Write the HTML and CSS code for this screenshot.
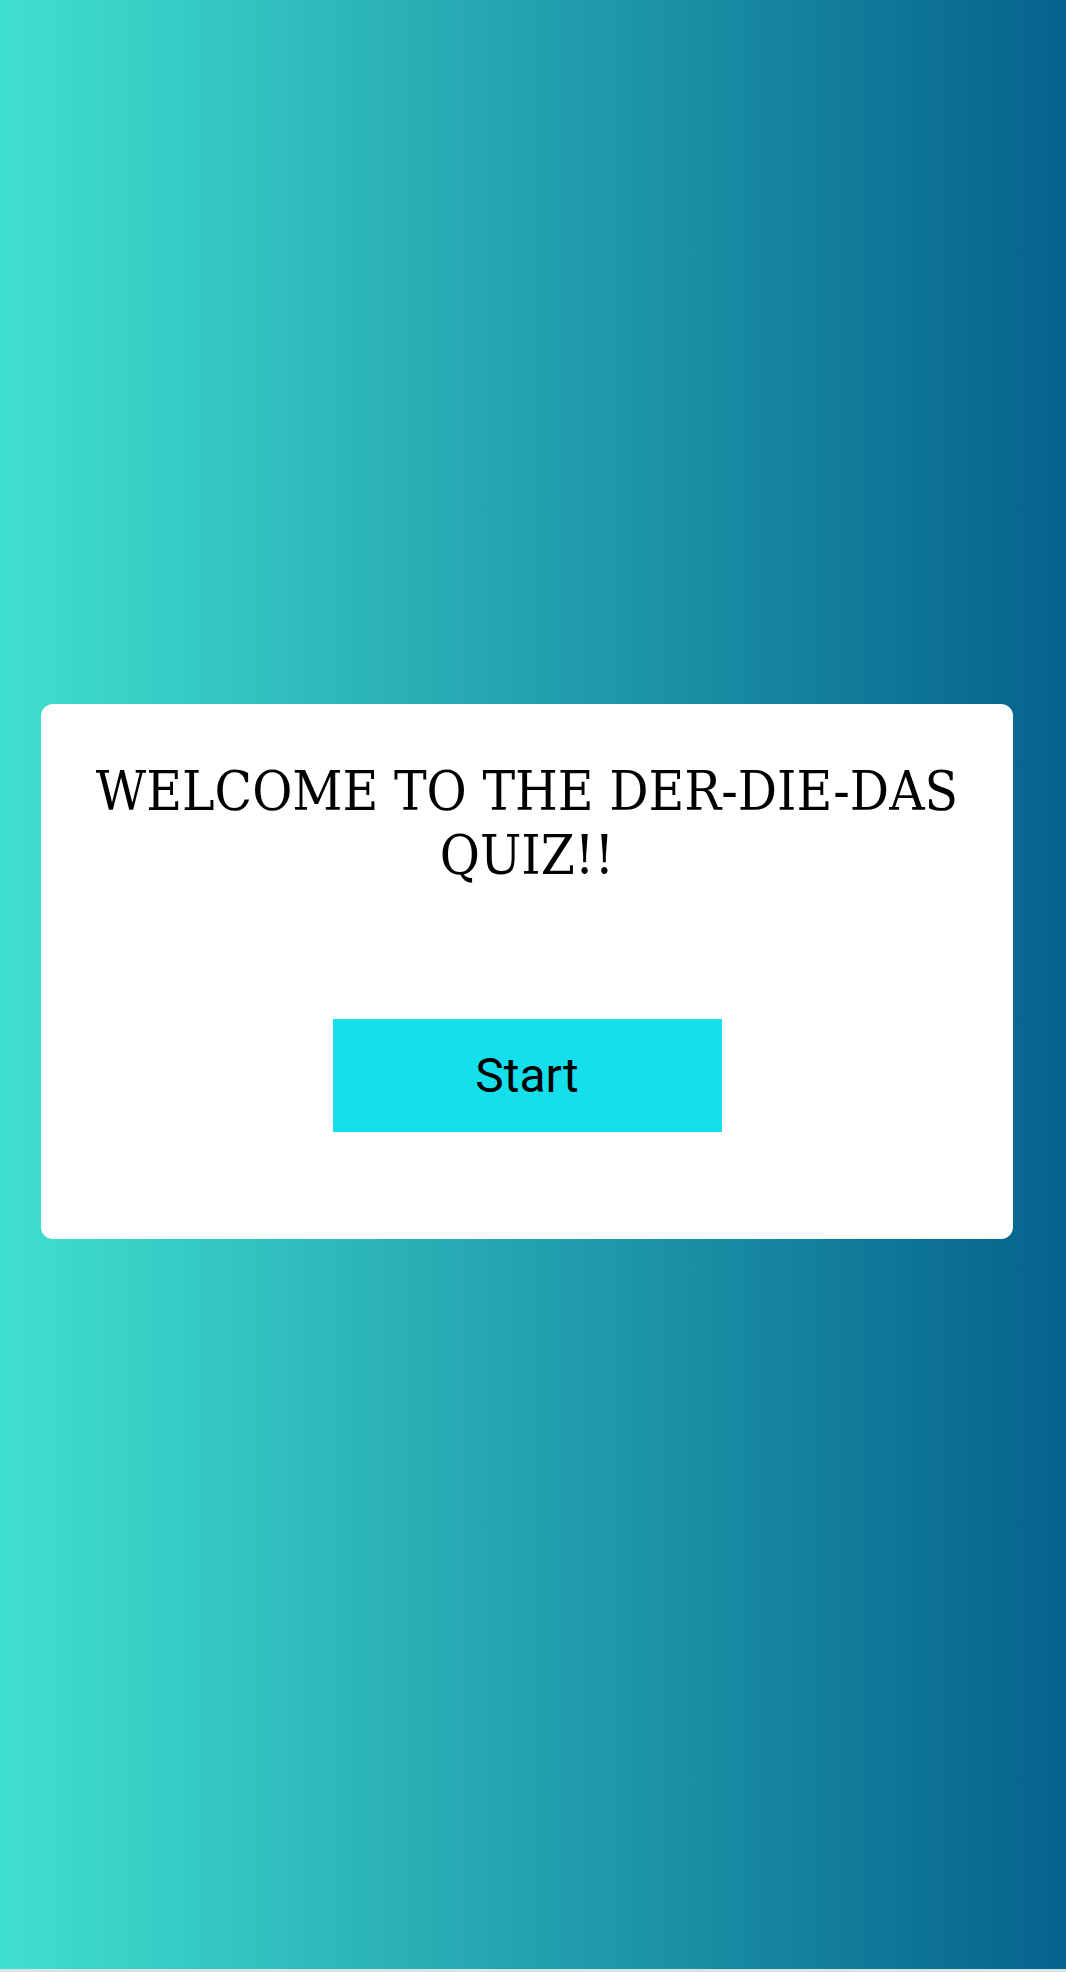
FILE: index.html
```html
<!DOCTYPE html>
<html lang="en">
<head>
<meta charset="utf-8">
<title>Der Die Das Quiz</title>
<link rel="stylesheet" href="styles.css">
</head>
<body>
<main class="page">
  <section class="card">
    <h1 class="title">WELCOME TO THE DER-DIE-DAS QUIZ!!</h1>
    <button class="start" type="button">Start</button>
  </section>
</main>
</body>
</html>
```

FILE: styles.css
```css
html {
  margin: 0;
  padding: 0;
  background: #d6e4e6;
}
body {
  margin: 0;
  padding: 0;
}
.page {
  height: 1969px;
  box-sizing: border-box;
  background: linear-gradient(to right, #40e0d0, #05628d);
  padding: 704px 53px 0 41px;
}
.card {
  background: #ffffff;
  border-radius: 12px;
  height: 535px;
  box-sizing: border-box;
  padding-top: 55px;
  display: flex;
  flex-direction: column;
  align-items: center;
}
.title {
  margin: 0;
  padding: 0 40px;
  font-family: "DejaVu Serif Condensed", "DejaVu Serif", serif;
  font-stretch: condensed;
  font-weight: 400;
  font-size: 54.5px;
  line-height: 64px;
  text-align: center;
  color: #000;
}
.start {
  margin-top: 132px;
  width: 389px;
  height: 113px;
  border: none;
  border-radius: 0;
  background: #14dfea;
  color: #000;
  font-family: Roboto, "Liberation Sans", sans-serif;
  font-size: 48px;
  padding: 0;
}
```
